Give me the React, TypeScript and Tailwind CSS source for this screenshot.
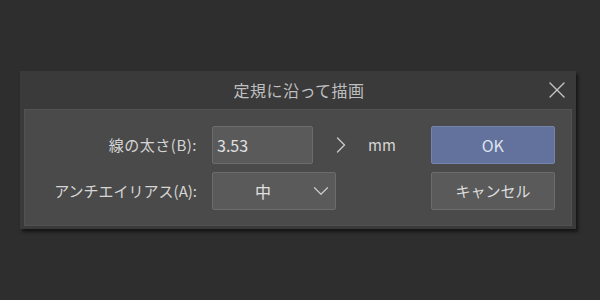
import { X, ChevronRight, ChevronDown } from "lucide-react";

const FONT = { fontFamily: '"Noto Sans CJK JP", "Noto Sans", sans-serif' };

export default function App() {
  return (
    <div className="h-[300px] w-[600px] overflow-hidden bg-[#2e2e2e] pt-[71px] pl-[20px]" style={FONT}>
      <div className="flex h-[158px] w-[556px] flex-col bg-[#3a3a3a] shadow-[2px_3px_3px_rgba(0,0,0,0.55)]">
        <div className="relative flex h-[38px] items-center justify-center">
          <span className="pl-[2px] text-[16px] tracking-[0.5px] text-[#bfbfbf]">定規に沿って描画</span>
          <X className="absolute right-[5px] top-[5px] h-[28px] w-[28px] text-[#c4c4c4]" strokeWidth={1.2} />
        </div>
        <div className="mx-[4px] flex h-[117px] flex-col gap-[8px] border border-[#525252] bg-[#4a4a4a] pt-[16px]">
          <div className="flex h-[38px] items-center">
            <span className="w-[172px] text-right text-[15px] tracking-[0.5px] text-[#d6d6d6]">線の太さ(B):</span>
            <div className="ml-[15px] flex h-[38px] w-[101px] items-center rounded-[2px] border border-[#6c6c6c] bg-[#5a5a5a] pl-[4px] text-[16px] text-[#e0e0e0]">
              3.53
            </div>
            <ChevronRight className="ml-[14px] h-[28px] w-[28px] text-[#c8c8c8]" strokeWidth={1.2} />
            <span className="ml-[13px] text-[15px] text-[#d6d6d6]">mm</span>
            <button className="ml-[35px] flex h-[38px] w-[124px] items-center justify-center rounded-[2px] border border-[#7584ab] bg-[#63729c] text-[16px] text-[#dde2ee]">
              OK
            </button>
          </div>
          <div className="flex h-[38px] items-center">
            <span className="w-[172px] text-right text-[15px] text-[#d6d6d6]">アンチエイリアス(A):</span>
            <div className="relative ml-[15px] flex h-[38px] w-[124px] items-center justify-center rounded-[2px] border border-[#6c6c6c] bg-[#5a5a5a] text-[16px] text-[#e0e0e0]">
              <span className="pr-[22px]">中</span>
              <ChevronDown className="absolute right-[1px] top-[5px] h-[26px] w-[26px] text-[#c8c8c8]" strokeWidth={1.2} />
            </div>
            <button className="ml-[95px] flex h-[38px] w-[124px] items-center justify-center rounded-[2px] border border-[#6c6c6c] bg-[#5a5a5a] text-[15px] text-[#dcdcdc]">
              キャンセル
            </button>
          </div>
        </div>
      </div>
    </div>
  );
}
